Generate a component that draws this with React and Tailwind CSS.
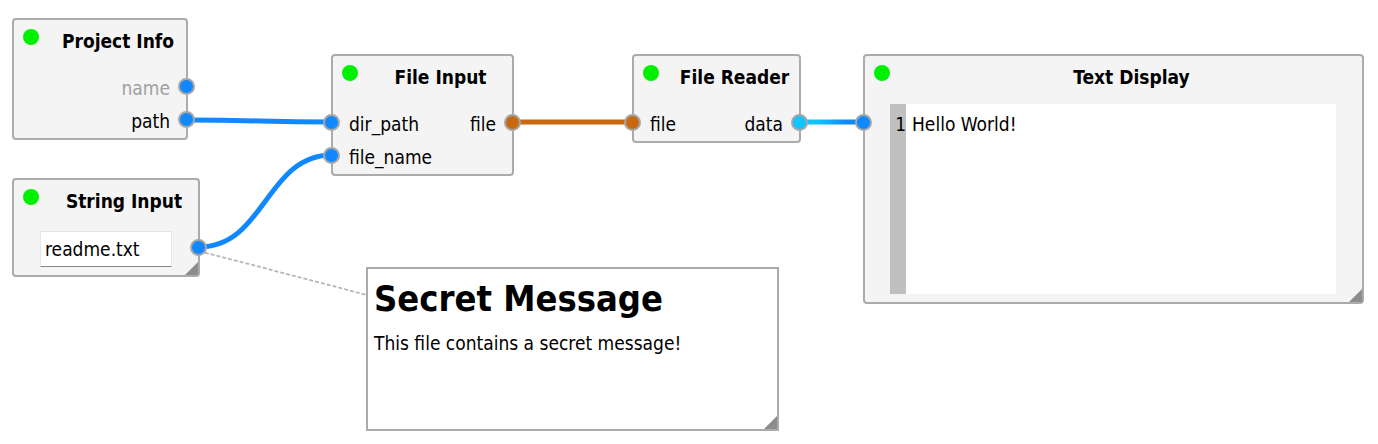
import React from "react";

const portColors = {
  string: "bg-[#1088ff]",
  file: "bg-[#c8690f]",
  data: "bg-[#10c4ff]",
};

function Port({ type, side }) {
  const edge = side === "left" ? "-left-[10px]" : "-right-[9px]";
  return (
    <span
      className={`absolute top-2 size-[17px] rounded-full border-2 border-[#a6a6a6] ${edge} ${portColors[type]}`}
    />
  );
}

function PortRow({ input, output }) {
  return (
    <div className="relative flex h-[33px] items-center justify-between px-4 pt-[2px]">
      {input && <Port type={input.type} side="left" />}
      <span>{input?.label}</span>
      <span className={output?.muted ? "text-[#a0a0a0]" : ""}>{output?.label}</span>
      {output && <Port type={output.type} side="right" />}
    </div>
  );
}

function ResizeGrip() {
  return (
    <svg className="absolute right-0 bottom-0 size-[13px]" viewBox="0 0 13 13" aria-hidden="true">
      <path d="M13 0V13H0Z" fill="#8c8c8c" />
    </svg>
  );
}

function Node({ title, place, children }) {
  return (
    <section
      className={`absolute flex flex-col rounded-[4px] border-2 border-[#ababab] bg-[#f4f4f4] ${place}`}
    >
      <header className="flex h-12 shrink-0 gap-5 px-[9px] pt-[9px]">
        <span className="size-4 shrink-0 rounded-full bg-[#00f000]" />
        <h2 className="grow text-center leading-6 font-bold whitespace-nowrap">{title}</h2>
      </header>
      {children}
    </section>
  );
}

function Wires() {
  return (
    <svg className="absolute inset-0 size-full" fill="none" aria-hidden="true">
      <defs>
        <linearGradient id="data-to-text" gradientUnits="userSpaceOnUse" x1="808" y1="0" x2="856" y2="0">
          <stop offset="0.2" stopColor="#10c4ff" />
          <stop offset="0.8" stopColor="#1088ff" />
        </linearGradient>
      </defs>
      <path d="M199 251L367 295" stroke="#b8b8b8" strokeWidth="1.8" strokeDasharray="4 2" />
      <g strokeWidth="5">
        <path d="M187 120C260 120 260 122 332 122" stroke="#1088ff" />
        <path d="M199 247C265 247 266 155 332 155" stroke="#1088ff" />
        <path d="M512 122H633" stroke="#c8690f" />
        <path d="M799 122H864" stroke="url(#data-to-text)" />
      </g>
    </svg>
  );
}

export default function App() {
  return (
    <main className="relative min-h-screen w-full overflow-hidden bg-white font-['DejaVu_Sans_Condensed','DejaVu_Sans',sans-serif] text-[19px] leading-6 text-black">
      <Wires />

      <Node title="Project Info" place="left-[12px] top-[18px] w-[176px]">
        <div className="pt-[2px] pb-[2px]">
          <PortRow output={{ label: "name", type: "string", muted: true }} />
          <PortRow output={{ label: "path", type: "string" }} />
        </div>
      </Node>

      <Node title="String Input" place="left-[12px] top-[178px] w-[188px]">
        <div className="relative px-[26px] pt-[3px] pb-2">
          <input
            aria-label="String value"
            defaultValue="readme.txt"
            className="block h-9 w-full border border-[#e6e6e6] border-b-[#868686] bg-white px-1 outline-none"
          />
          <div className="absolute inset-x-0 top-[3px]">
            <Port type="string" side="right" />
          </div>
        </div>
        <ResizeGrip />
      </Node>

      <Node title="File Input" place="left-[331px] top-[54px] w-[183px]">
        <div className="pt-[2px] pb-[2px]">
          <PortRow
            input={{ label: "dir_path", type: "string" }}
            output={{ label: "file", type: "file" }}
          />
          <PortRow input={{ label: "file_name", type: "string" }} />
        </div>
      </Node>

      <Node title="File Reader" place="left-[632px] top-[54px] w-[169px]">
        <div className="pt-[2px] pb-[2px]">
          <PortRow
            input={{ label: "file", type: "file" }}
            output={{ label: "data", type: "data" }}
          />
        </div>
      </Node>

      <Node title="Text Display" place="left-[863px] top-[54px] w-[501px] h-[250px]">
        <div className="relative flex grow pr-[26px] pb-2 pl-[25px]">
          <div className="absolute top-[2px] left-0">
            <Port type="string" side="left" />
          </div>
          <div className="w-4 shrink-0 bg-[#c0c0c0] pt-2 text-right">1</div>
          <textarea
            aria-label="Text"
            readOnly
            defaultValue="Hello World!"
            className="grow resize-none bg-white px-[6px] pt-2 outline-none"
          />
        </div>
        <ResizeGrip />
      </Node>

      <article className="absolute top-[267px] left-[366px] h-[164px] w-[413px] border-2 border-[#ababab] bg-white px-[6px] pt-[6px]">
        <h1 className="text-[36px] leading-12 font-bold whitespace-nowrap">Secret Message</h1>
        <p className="pt-2">This file contains a secret message!</p>
        <ResizeGrip />
      </article>
    </main>
  );
}
